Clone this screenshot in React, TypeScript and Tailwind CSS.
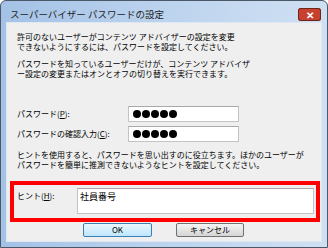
import React from "react";

const font = { fontFamily: '"Noto Sans CJK JP", "Noto Sans", sans-serif' };

function Dots() {
  return (
    <div className="flex gap-[1px] pl-[4px]">
      {[0, 1, 2, 3, 4].map((i) => (
        <span key={i} className="block h-[8px] w-[8px] rounded-full bg-black" />
      ))}
    </div>
  );
}

function PasswordRow({ label, keyChar }: { label: string; keyChar: string }) {
  return (
    <div className="flex h-[16px] items-center">
      <span className="w-[111px] text-[8px] leading-[10px]">
        {label}(<span className="underline">{keyChar}</span>):
      </span>
      <div className="flex h-[16px] w-[111px] items-center border border-[#c3c3c3] border-t-[#a8a8a8] bg-white">
        <Dots />
      </div>
    </div>
  );
}

export default function App() {
  return (
    <div
      style={font}
      className="flex h-[248px] w-[328px] flex-col overflow-hidden rounded-t-[6px] border border-[#4b5868] bg-gradient-to-r from-[#a4c2e6] via-[#bcd3ee] to-[#d0e0f3] text-black"
    >
      {/* title bar */}
      <div className="flex h-[21px] shrink-0 items-end justify-between pl-[9px] pr-[6px]">
        <span className="pb-[3px] text-[9.5px] leading-none text-[#1e1e1e]">
          スーパーバイザー パスワードの設定
        </span>
        <div className="mb-[1px] flex h-[13px] w-[23px] shrink-0 items-center justify-center rounded-[3px] bg-[#c8412f] text-[10px] font-bold leading-none text-white shadow-[inset_0_0_0_1px_#6e2519]">
          ✕
        </div>
      </div>

      {/* content panel */}
      <div className="mx-[5px] flex h-[220px] shrink-0 flex-col border border-[#dfe8f2] bg-[#efefef]">
        <div className="pl-[10px] pt-[9px] text-[8px] leading-[10px]">
          <p>許可のないユーザーがコンテンツ アドバイザーの設定を変更</p>
          <p>できないようにするには、パスワードを設定してください。</p>
          <p className="mt-[7px]">パスワードを知っているユーザーだけが、コンテンツ アドバイザ</p>
          <p>ー設定の変更またはオンとオフの切り替えを実行できます。</p>
        </div>

        <div className="mt-[27px] flex flex-col gap-[4px] pl-[10px]">
          <PasswordRow label="パスワード" keyChar="P" />
          <PasswordRow label="パスワードの確認入力" keyChar="C" />
        </div>

        <div className="mt-[8px] pl-[10px] text-[8px] leading-[10px]">
          <p>ヒントを使用すると、パスワードを思い出すのに役立ちます。ほかのユーザーが</p>
          <p>パスワードを簡単に推測できないようなヒントを設定してください。</p>
        </div>

        <div className="ml-[3px] mr-[1px] mt-[11px] flex h-[41px] border-[4px] border-[#ff0000] pb-[4px] pl-[3px] pr-[2px] pt-[3px]">
          <span className="w-[60px] pt-[3px] text-[8px] leading-[10px]">
            ヒント(<span className="underline">H</span>):
          </span>
          <div className="flex-1 border border-[#c3c3c3] border-t-[#a8a8a8] bg-white pl-[2px] pt-[2px] text-[9px] leading-[11px]">
            社員番号
          </div>
        </div>

        <div className="mt-[1px] flex gap-[24px] pl-[76px]">
          <button className="flex h-[14px] w-[69px] items-center justify-center rounded-[2px] border border-[#3c7fb1] bg-gradient-to-b from-[#eaf6fd] to-[#bee6fd] text-[8px] leading-none">
            OK
          </button>
          <button className="flex h-[14px] w-[68px] items-center justify-center rounded-[2px] border border-[#707070] bg-gradient-to-b from-[#f4f4f4] to-[#d5d5d5] text-[8px] leading-none">
            キャンセル
          </button>
        </div>
      </div>
    </div>
  );
}
